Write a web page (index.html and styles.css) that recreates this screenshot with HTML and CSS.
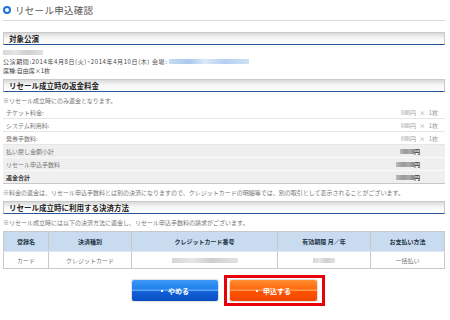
FILE: index.html
```html
<!DOCTYPE html>
<html lang="ja">
<head>
  <meta charset="UTF-8" />
  <title>リセール申込確認</title>
  <link rel="stylesheet" href="styles.css">
</head>
<body>
  <div class="page">
    <h1 class="title"><span class="ring"></span>リセール申込確認</h1>

    <h2 class="sec-head">対象公演</h2>
    <div class="event">
      <div class="line"><span class="blur w40"></span></div>
      <div class="line wide">公演期間:2014年4月8日(火)~2014年4月10日(木) 会場:<span class="blur link w80"></span></div>
      <div class="line">席種:自由席×1枚</div>
    </div>

    <h2 class="sec-head">リセール成立時の返金料金</h2>
    <p class="note">※リセール成立時にのみ返金となります。</p>
    <table class="fees">
      <tr>
        <td class="label">チケット料金:</td>
        <td class="val"><span class="blur w9"></span>円 <span class="x">×</span> 1枚</td>
      </tr>
      <tr>
        <td class="label">システム利用料:</td>
        <td class="val"><span class="blur w9"></span>円 <span class="x">×</span> 1枚</td>
      </tr>
      <tr>
        <td class="label">発券手数料:</td>
        <td class="val"><span class="blur w9"></span>円 <span class="x">×</span> 1枚</td>
      </tr>
      <tr class="sum">
        <td class="label">払い戻し金額小計</td>
        <td class="val"><span class="blur dark w14"></span>円</td>
      </tr>
      <tr class="sum">
        <td class="label">リセール申込手数料</td>
        <td class="val"><span class="blur dark w18"></span>円</td>
      </tr>
      <tr class="sum total">
        <td class="label">返金合計</td>
        <td class="val"><span class="blur dark w18"></span>円</td>
      </tr>
    </table>
    <p class="note">※料金の返金は、リセール申込手数料とは別の決済になりますので、クレジットカードの明細等では、別の取引として表示されることがございます。</p>

    <h2 class="sec-head">リセール成立時に利用する決済方法</h2>
    <p class="note">※リセール成立時には以下の決済方法に返金し、リセール申込手数料の請求がございます。</p>
    <table class="pay">
      <tr>
        <th class="c1">登録名</th>
        <th class="c2">決済種別</th>
        <th class="c3">クレジットカード番号</th>
        <th class="c4">有効期限 月／年</th>
        <th class="c5">お支払い方法</th>
      </tr>
      <tr>
        <td>カード</td>
        <td>クレジットカード</td>
        <td><span class="blur w66"></span></td>
        <td><span class="blur w22"></span></td>
        <td>一括払い</td>
      </tr>
    </table>

    <div class="actions">
      <a class="btn cancel"><span class="dot"></span>やめる</a>
      <div class="focus">
        <a class="btn submit"><span class="dot"></span>申込する</a>
      </div>
    </div>
  </div>
</body>
</html>
```

FILE: styles.css
```css
body {
  margin: 0;
  background: #fff;
  font-family: "Noto Sans CJK JP", "Noto Sans", sans-serif;
  font-size: 6px;
  color: #555;
}

.page {
  padding: 0 5px 0 3px;
}

.title {
  margin: 0;
  height: 20px;
  display: flex;
  align-items: center;
  gap: 4px;
  font-size: 9.5px;
  font-weight: normal;
  letter-spacing: 0.3px;
  color: #555;
  border-bottom: 1px solid #dcdcdc;
}

.ring {
  width: 4px;
  height: 4px;
  border: 2px solid #1d72d8;
  border-radius: 50%;
}

.sec-head {
  margin: 11px 0 0;
  height: 11px;
  line-height: 11px;
  padding-left: 5px;
  border: 1px solid #c9c9c9;
  border-bottom-color: #2a5796;
  background: linear-gradient(#d9d9d9, #f6f6f6 45%, #fff);
  font-size: 7.5px;
  font-weight: bold;
  color: #222;
}

.event {
  padding: 3px 0 4px;
}

.event + .sec-head {
  margin-top: 0;
}

.note + .sec-head {
  margin-top: 4px;
}

.line {
  height: 9px;
  line-height: 9px;
  display: flex;
  align-items: center;
  color: #444;
}

.line.wide {
  letter-spacing: 0.6px;
}

.blur {
  display: inline-block;
  height: 5px;
  vertical-align: middle;
  background: linear-gradient(90deg, #d6d6d6, #e6e6e6 30%, #cfcfcf 60%, #e2e2e2);
}

.blur.link {
  background: linear-gradient(90deg, #c6dcf3, #a9c9ee 25%, #dce9f7 45%, #b3d0f0 70%, #cfe1f5);
  margin-left: 2px;
}

.blur.dark {
  background: linear-gradient(90deg, #bbb, #999 40%, #aaa 70%, #888);
}

.w9 { width: 9px; }
.w14 { width: 14px; }
.w18 { width: 18px; }
.w22 { width: 22px; }
.w40 { width: 40px; }
.w66 { width: 66px; }
.w80 { width: 80px; }

.note {
  margin: 0;
  padding-top: 4px;
  height: 9px;
  line-height: 9px;
  color: #777;
  white-space: nowrap;
}

.fees {
  width: 100%;
  margin-top: 1px;
  border-collapse: collapse;
}

.fees td {
  height: 12px;
  padding: 0;
  border-bottom: 1px solid #e6e6e6;
  color: #777;
}

.fees .label {
  padding-left: 3px;
}

.fees .val {
  text-align: right;
  padding-right: 7px;
  color: #999;
}

.fees .x {
  margin: 0 2px;
}

.fees .sum td {
  background: #efefef;
  border-bottom-color: #fafafa;
}

.fees .sum .val {
  padding-right: 25px;
  color: #333;
  font-weight: bold;
}

.fees .total td {
  border-bottom-color: #c8c8c8;
}

.fees .total .label {
  color: #333;
  font-weight: bold;
}

.pay {
  width: 100%;
  margin-top: 4px;
  border-collapse: collapse;
  border: 1px solid #c8c8c8;
}

.pay th,
.pay td {
  padding: 0;
  text-align: center;
  border-left: 1px solid #c8c8c8;
}

.pay th {
  height: 19px;
  background: #c8dbef;
  color: #234;
  font-weight: bold;
  border-bottom: 1px solid #dde8f4;
}

.pay td {
  height: 16px;
  color: #777;
}

.pay .c1 { width: 44px; }
.pay .c2 { width: 82px; }
.pay .c3 { width: 145px; }
.pay .c4 { width: 92px; }

.actions {
  margin-top: 6px;
  padding-left: 9px;
  display: flex;
  justify-content: center;
  align-items: center;
  gap: 6px;
}

.focus {
  border: 3px solid #e8000b;
  padding: 2px 5px 2px 3px;
}

.btn {
  width: 86px;
  height: 21px;
  display: flex;
  align-items: center;
  justify-content: center;
  border-radius: 2px;
  box-shadow: 0 0 0 1px #e2e2e2;
  color: #fff;
  font-size: 7px;
  font-weight: bold;
}

.btn.cancel {
  background: linear-gradient(#3d9af7, #2080ee 40%, #5aa6f4 50%, #1260d8 55%, #0a4fc4);
}

.btn.submit {
  width: 87px;
  background: linear-gradient(#ff8e30, #ff6d12 40%, #ff9550 50%, #ff5200 55%, #f04600);
}

.dot {
  width: 2px;
  height: 2px;
  background: #fff;
  margin-right: 5px;
}
```
